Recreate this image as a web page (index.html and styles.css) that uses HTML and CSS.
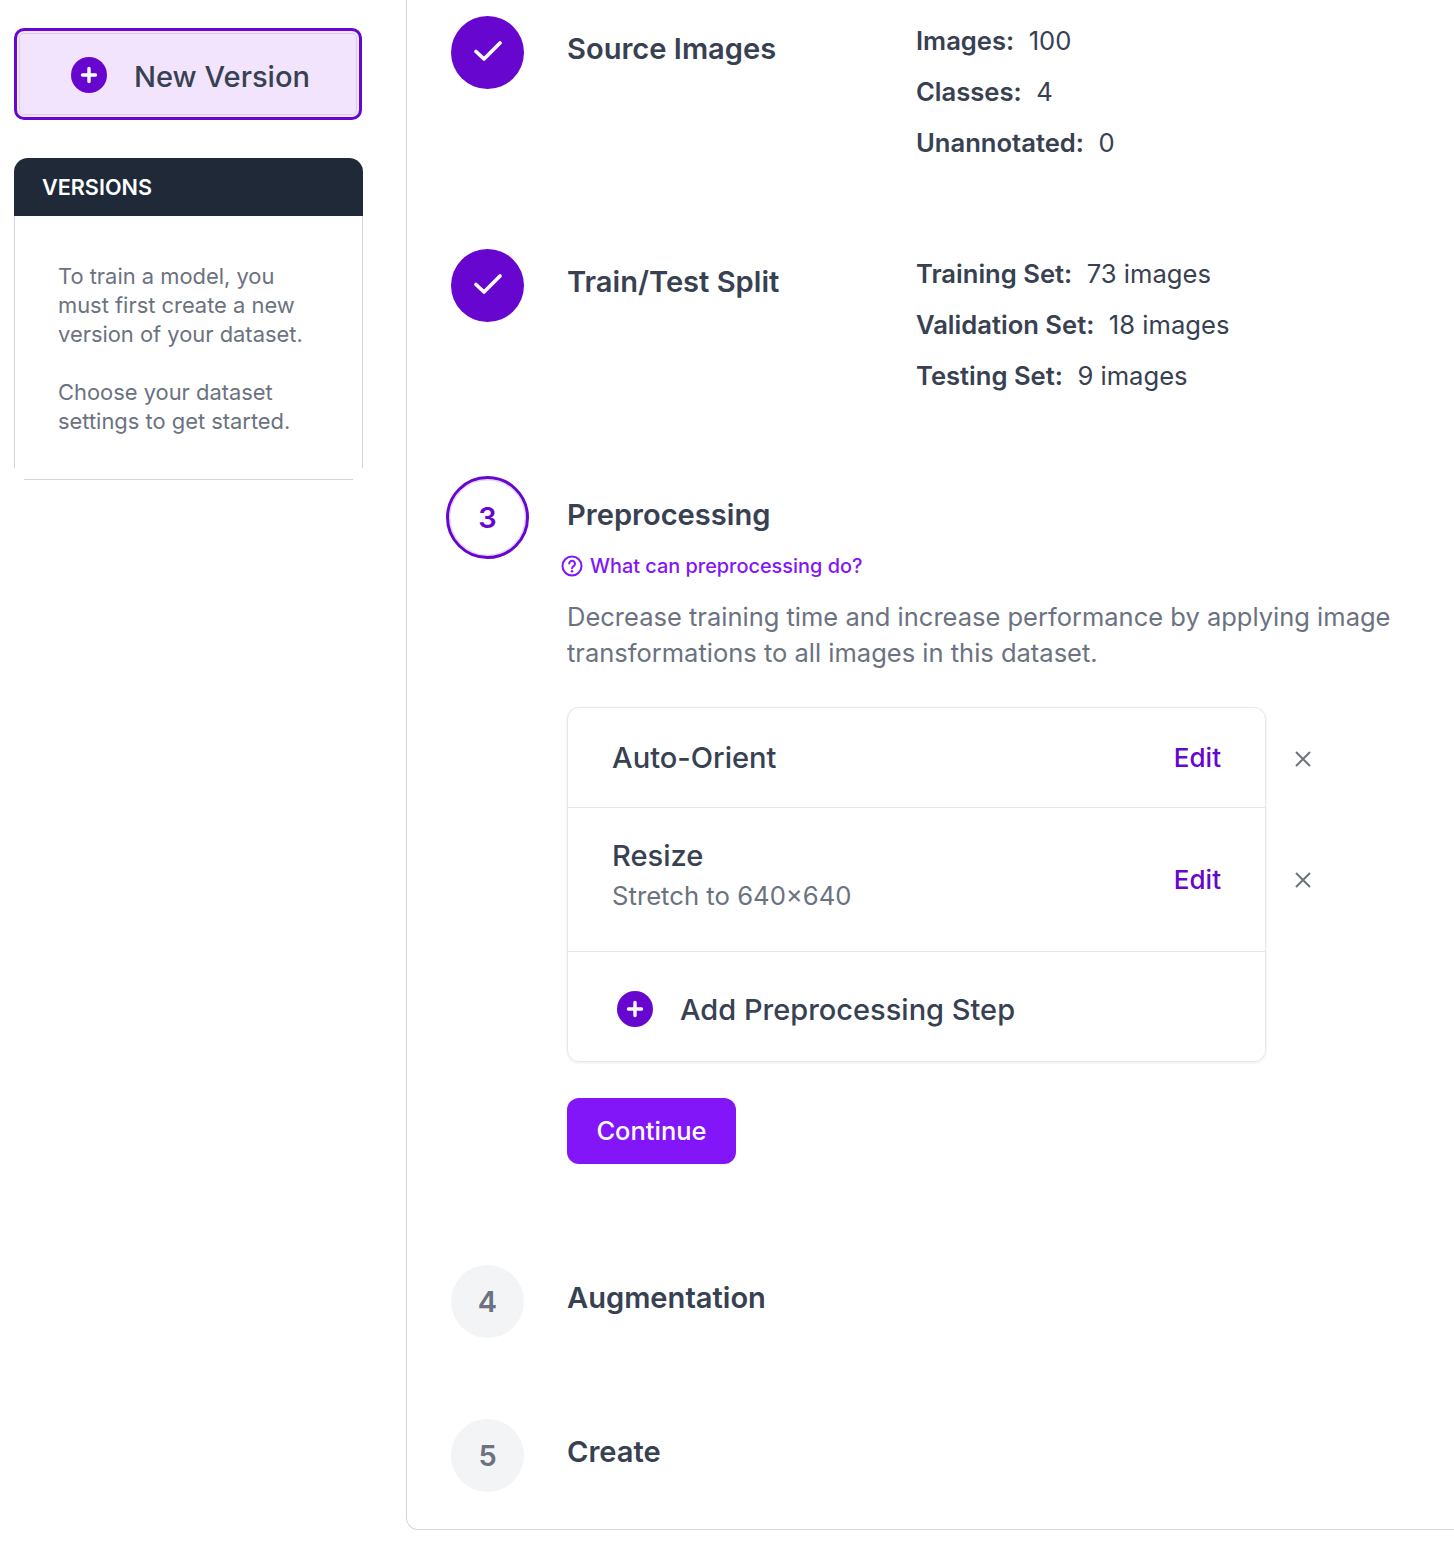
FILE: index.html
```html
<!DOCTYPE html>
<html>
<head>
    <meta charset="UTF-8">
    <meta name="viewport" content="width=device-width, initial-scale=1.0">
    <title>Generate Version</title>
    <link rel="stylesheet" href="styles.css">
</head>
<body>
    <div class="page">
        <aside class="sidebar">
            <button class="new-version">
                <svg class="plus-icon" viewBox="0 0 36 36"><circle cx="18" cy="18" r="18" fill="#6706ce"/><path d="M18 11.5v13M11.5 18h13" stroke="#fff" stroke-width="3.4" stroke-linecap="round"/></svg>
                <span>New Version</span>
            </button>
            <div class="versions">
                <div class="versions-head">VERSIONS</div>
                <div class="versions-body">
                    <p>To train a model, you must first create a new version of your dataset.</p>
                    <p>Choose your dataset settings to get started.</p>
                </div>
            </div>
        </aside>

        <main class="main">
            <section class="step step-source">
                <div class="marker done">
                    <svg viewBox="0 0 28 22" class="check"><path d="M2 11.5l8 7.5L26 3" fill="none" stroke="#fff" stroke-width="3.6" stroke-linecap="round" stroke-linejoin="round"/></svg>
                </div>
                <h2 class="step-title">Source Images</h2>
                <div class="details">
                    <div><b>Images:</b>100</div>
                    <div><b>Classes:</b>4</div>
                    <div><b>Unannotated:</b>0</div>
                </div>
            </section>

            <section class="step step-split">
                <div class="marker done">
                    <svg viewBox="0 0 28 22" class="check"><path d="M2 11.5l8 7.5L26 3" fill="none" stroke="#fff" stroke-width="3.6" stroke-linecap="round" stroke-linejoin="round"/></svg>
                </div>
                <h2 class="step-title">Train/Test Split</h2>
                <div class="details">
                    <div><b>Training Set:</b>73 images</div>
                    <div><b>Validation Set:</b>18 images</div>
                    <div><b>Testing Set:</b>9 images</div>
                </div>
            </section>

            <section class="step step-active">
                <div class="marker active">3</div>
                <div class="step-content">
                    <h2 class="step-title">Preprocessing</h2>
                    <a class="help-link" href="#">
                        <svg viewBox="0 0 22 22" class="help-icon"><circle cx="11" cy="11" r="9.5" fill="none" stroke="#8315f9" stroke-width="2"/><path d="M8.2 8.6a2.9 2.9 0 1 1 4.4 2.5c-1 .6-1.6 1.1-1.6 2.2" fill="none" stroke="#8315f9" stroke-width="2" stroke-linecap="round"/><circle cx="11" cy="16.2" r="1.2" fill="#8315f9"/></svg>
                        What can preprocessing do?
                    </a>
                    <p class="description">Decrease training time and increase performance by applying image transformations to all images in this dataset.</p>

                    <div class="options-row">
                        <div class="options">
                            <div class="option option-orient">
                                <div class="option-name">Auto-Orient</div>
                                <a class="edit" href="#">Edit</a>
                            </div>
                            <div class="option option-resize">
                                <div class="option-text">
                                    <div class="option-name">Resize</div>
                                    <div class="option-sub">Stretch to 640×640</div>
                                </div>
                                <a class="edit" href="#">Edit</a>
                            </div>
                            <div class="option-add">
                                <svg class="plus-icon" viewBox="0 0 36 36"><circle cx="18" cy="18" r="18" fill="#6706ce"/><path d="M18 11.5v13M11.5 18h13" stroke="#fff" stroke-width="3.4" stroke-linecap="round"/></svg>
                                <span>Add Preprocessing Step</span>
                            </div>
                        </div>
                        <div class="removers">
                            <svg class="remove" viewBox="0 0 16 16"><path d="M1 1l14 14M15 1L1 15" stroke="#6b7280" stroke-width="2"/></svg>
                            <svg class="remove" viewBox="0 0 16 16"><path d="M1 1l14 14M15 1L1 15" stroke="#6b7280" stroke-width="2"/></svg>
                        </div>
                    </div>

                    <button class="continue">Continue</button>
                </div>
            </section>

            <section class="step step-aug">
                <div class="marker todo">4</div>
                <h2 class="step-title">Augmentation</h2>
            </section>

            <section class="step step-create">
                <div class="marker todo">5</div>
                <h2 class="step-title">Create</h2>
            </section>
        </main>
    </div>
</body>
</html>
```

FILE: styles.css
```css
body {
    margin: 0;
    background-color: #fff;
    font-family: Inter, "Liberation Sans", sans-serif;
    color: #374151;
    overflow: hidden;
}

.page {
    display: flex;
    align-items: flex-start;
    height: 1554px;
}

.sidebar {
    box-sizing: border-box;
    width: 406px;
    flex-shrink: 0;
    padding: 28px 43px 0 14px;
}

.new-version {
    box-sizing: border-box;
    display: flex;
    align-items: center;
    gap: 27px;
    width: 348px;
    height: 92px;
    margin: 0;
    padding: 2px 0 0 54px;
    background-color: #f3e4fd;
    border: 3px solid #6706ce;
    border-radius: 10px;
    box-shadow: inset 0 0 0 2px #f3e4fd, inset 0 0 0 3px #d4d0e2;
    font-family: inherit;
    font-size: 29.1px;
    font-weight: 500;
    color: #374151;
}

.new-version span {
    padding-top: 3px;
}

.plus-icon {
    width: 36px;
    height: 36px;
    flex-shrink: 0;
}

.versions {
    margin-top: 38px;
}

.versions-head {
    box-sizing: border-box;
    height: 58px;
    padding: 0 28px;
    line-height: 58px;
    background-color: #1f2937;
    color: #fff;
    border-radius: 14px 14px 0 0;
    font-size: 21.6px;
    font-weight: 600;
}

/* side lines stop short of the corners, as in the real panel */
.versions-body {
    box-sizing: border-box;
    height: 264px;
    padding: 46px 44px 0;
    background:
        linear-gradient(#d1d5db, #d1d5db) left top / 1px calc(100% - 12px) no-repeat,
        linear-gradient(#d1d5db, #d1d5db) right top / 1px calc(100% - 12px) no-repeat,
        linear-gradient(#d1d5db, #d1d5db) center bottom / calc(100% - 20px) 1px no-repeat;
    color: #6b7280;
    font-size: 21.9px;
    line-height: 29px;
}

.versions-body p {
    margin: 0 0 29px;
}

.main {
    box-sizing: border-box;
    flex: 1;
    height: 1530px;
    padding: 16px 0 0 44px;
    border-left: 1px solid #d1d5db;
    border-bottom: 1px solid #d1d5db;
    border-bottom-left-radius: 12px;
}

.step {
    display: flex;
    align-items: flex-start;
}

.step-source {
    height: 233px;
}

.step-split {
    height: 228px;
}

.step-active {
    height: 788px;
}

.step-aug {
    height: 154px;
}

.marker {
    box-sizing: border-box;
    width: 73px;
    height: 73px;
    flex-shrink: 0;
    margin-right: 43px;
    border-radius: 50%;
    display: flex;
    align-items: center;
    justify-content: center;
    font-size: 29px;
    font-weight: 600;
}

.marker.done {
    background-color: #6706ce;
}

.check {
    width: 28px;
    height: 22px;
    margin-bottom: 3px;
}

.marker.active {
    width: 83px;
    height: 83px;
    margin: -1px 38px 0 -5px;
    border: 3px solid #6706ce;
    box-shadow: inset 0 0 0 1.5px #e6d8f8;
    color: #6706ce;
}

.marker.todo {
    background-color: #f3f4f6;
    color: #6b7280;
}

.step-title {
    margin: 0;
    width: 350px;
    flex-shrink: 0;
    font-size: 29.1px;
    line-height: 66px;
    font-weight: 600;
    color: #374151;
}

.details {
    margin: -1px 0 0 -1px;
    font-size: 25.6px;
    line-height: 51px;
}

.details b {
    font-weight: 600;
    margin-right: 14.5px;
}

.step-content {
    width: 830px;
    flex-shrink: 0;
    margin-top: 5px;
}

.step-content .step-title {
    width: auto;
}

.help-link {
    display: flex;
    align-items: center;
    gap: 7px;
    margin: 1px 0 0 -6px;
    color: #8315f9;
    font-size: 19.9px;
    font-weight: 500;
    line-height: 34px;
    text-decoration: none;
}

.help-icon {
    width: 22px;
    height: 22px;
}

.description {
    margin: 16px 0 0;
    font-size: 25.5px;
    line-height: 36px;
    color: #6b7280;
}

.options-row {
    display: flex;
    margin-top: 36px;
}

.options {
    box-sizing: border-box;
    width: 699px;
    height: 355px;
    border: 1px solid #e5e7eb;
    border-radius: 12px;
    box-shadow: 0 1px 3px rgba(0, 0, 0, 0.08);
}

.option {
    box-sizing: border-box;
    display: flex;
    align-items: center;
    justify-content: space-between;
    padding: 0 44px;
    border-bottom: 1px solid #e5e7eb;
}

.option-orient {
    height: 100px;
}

.option-resize {
    height: 144px;
}

.option-text {
    padding-bottom: 7px;
}

.option-name {
    font-size: 29.1px;
    font-weight: 500;
    line-height: 40px;
}

.option-sub {
    font-size: 25.7px;
    line-height: 40px;
    color: #6b7280;
}

.edit {
    color: #6706ce;
    font-size: 26px;
    font-weight: 500;
    text-decoration: none;
}

.option-add {
    box-sizing: border-box;
    display: flex;
    align-items: center;
    gap: 27px;
    height: 109px;
    padding: 5px 0 0 49px;
    font-size: 29px;
    font-weight: 500;
}

.removers {
    display: flex;
    flex-direction: column;
    padding: 44px 0 0 28.5px;
    gap: 105px;
}

.remove {
    width: 16px;
    height: 16px;
}

.continue {
    display: block;
    width: 169px;
    height: 66px;
    margin-top: 36px;
    padding: 0 0 2px;
    background-color: #8315f9;
    color: #fff;
    border: none;
    border-radius: 12px;
    font-family: inherit;
    font-size: 25.5px;
    font-weight: 500;
}
```
